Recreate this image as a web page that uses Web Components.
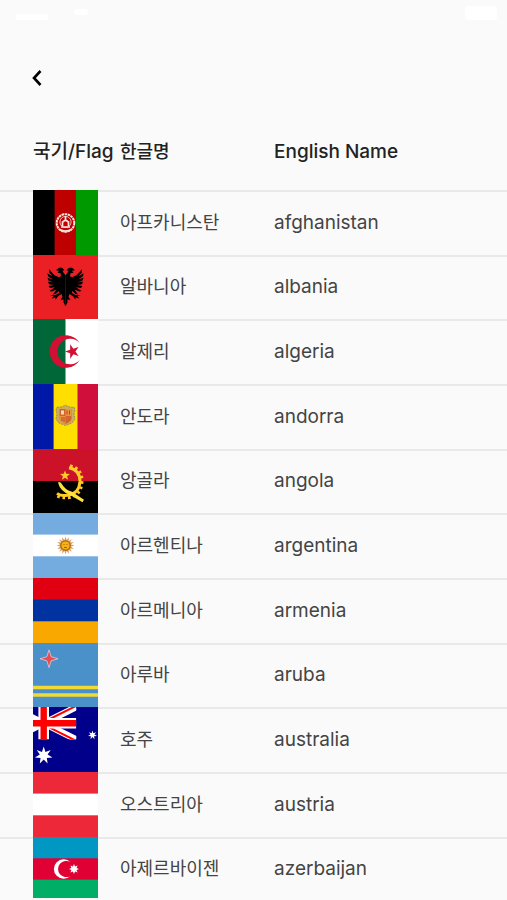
<!DOCTYPE html>
<html lang="ko">
<head>
<meta charset="utf-8">
<meta name="viewport" content="width=device-width, initial-scale=1">
<title>국기/Flag</title>
<style>
    body {
        margin: 0;
        background: #fafafa;
        color: #444;
        font-family: Inter, 'Noto Sans CJK KR', sans-serif;
    }
</style>
</head>
<body>
<flag-app>
    <status-bar slot="top"></status-bar>
    <nav-bar slot="top"></nav-bar>
    <country-table></country-table>
</flag-app>

<script>
// points of a regular star, first point at the given angle
const star = (cx, cy, outer, inner, points, angle = -90) => {
    const list = [];
    for (let i = 0; i < points * 2; i++) {
        const r = i % 2 ? inner : outer;
        const a = (angle + i * 180 / points) * Math.PI / 180;
        list.push(`${(cx + r * Math.cos(a)).toFixed(2)},${(cy + r * Math.sin(a)).toFixed(2)}`);
    }
    return list.join(' ');
};

const bands = (a, b, c) => `
    <rect width="65" height="65" fill="${b}"/>
    <rect width="65" height="21.6" fill="${a}"/>
    <rect y="43.3" width="65" height="21.7" fill="${c}"/>`;

const pales = (a, b, c, left = 21.6, right = 43) => `
    <rect width="65" height="65" fill="${b}"/>
    <rect width="${left}" height="65" fill="${a}"/>
    <rect x="${right}" width="${65 - right}" height="65" fill="${c}"/>`;

const eagleHalf = `
    <path d="M32.5 20.5 L30.5 18 L29.5 16 L31.5 15.5 L29 13 L26 13 L23 15.500 L26 16 L24.5 18 L27.5 18.5 L28 21.500 L26 22.5
        L21.500 20.500 L16 14.5 L16 17.500 L19.5 21.5 L14.500 18.5 L15 21.500 L20 25 L14.500 23 L15.500 26 L20.5 28 L15 27 L16 29.8
        L21 30.500 L15.500 31.5 L17 33.5 L22 32.8 L16.500 36.500 L19 37 L23.5 35 L20 40 L22.5 39.5 L26 36.5 L26 38.500 L22.500 40.500
        L17.5 40.5 L20.5 42 L18.5 44.5 L22.5 43 L22.5 45.5 L25 42 L28.500 39.500 L29.500 42.500 L27.500 46 L30.500 45 L30.5 48 L32.5 52 Z"/>`;

const flags = {
    afghanistan: `${pales('#000', '#be0000', '#009a00')}
        <g fill="none" stroke="#fbe5df">
            <circle cx="32.5" cy="33" r="8.800" stroke-width="2" stroke-dasharray="2.500 .6"/>
            <circle cx="32.5" cy="32" r="5.6" stroke-width=".8"/>
            <path d="M28 37h9M29.500 36v-4l3-2 3 2v4M32.500 26v4M26.500 39.500q6 3 12 0" stroke-width="1.700"/>
        </g>`,
    albania: `<rect width="65" height="65" fill="#ea2024"/>${eagleHalf}
        <g transform="matrix(-1 0 0 1 65 0)">${eagleHalf}</g>`,
    algeria: `<rect width="65" height="65" fill="#fff"/><rect width="32.500" height="65" fill="#006738"/>
        <path d="M46.800 24A16.300 16.300 0 1 0 46.800 41A12.800 12.800 0 1 1 46.800 24Z" fill="#d21034"/>
        <polygon points="${star(39.5, 32.5, 7.5, 2.9, 5, 180)}" fill="#d21034"/>`,
    andorra: `${pales('#0018a8', '#fedf00', '#d0103a', 20.6, 44.5)}
        <path d="M24 23q4 1 8.500-2Q37 24 41 23l1 3-1 4 1 5-3 4-6.500 2.500L26 39l-3-4 1-5-1-4Z" fill="#c9ae5b" stroke="#a58a4d" stroke-width="1" stroke-dasharray="2 1"/>
        <path d="M26.500 25h12v10q-1 3-6 5-5-2-6-5Z" fill="#d5632f"/>
        <path d="M32.500 25h6v7h-6ZM26.500 32h6v8q-5-2-6-5Z" fill="#e7963a"/>
        <path d="M28 26.500h3v4h-3Z" fill="#f4dfb4"/>
        <path d="M34 26.500v4M36.500 26.500v4M29 33v4M31 33v5" stroke="#c63d2f"/>`,
    angola: `<rect width="65" height="65"/><rect width="65" height="32.500" fill="#cc1228"/>
        <path d="M36 19Q47 21 47 33Q46 46 34 47Q28 48 24 45" fill="none" stroke="#ffcb28" stroke-width="3"/>
        <path d="M37 17Q49.500 20 49 33Q48.500 47.500 35 49.500Q28 50 22.500 47" fill="none" stroke="#ffcb28" stroke-width="3" stroke-dasharray="2.600 2.800"/>
        <path d="M25 34q2-1.500 3.500 1 3 6 10.500 8.500l12 8-1.500 2.500-12-7Q27 43 25 34Z" fill="#ffe13b"/>
        <polygon points="${star(32, 27, 5.2, 2.2, 5)}" fill="#ffcb28"/>`,
    argentina: `${bands('#74acdf', '#fff', '#74acdf')}
        <polygon points="${star(32.5, 32.5, 9, 5.5, 16)}" fill="#d9a066"/>
        <circle cx="32.500" cy="32.500" r="4.700" fill="#f6b40e" stroke="#aa6518" stroke-width="1.300"/>
        <path d="M30.500 31.500h1M33.500 31.500h1M31 34.500h3" stroke="#85340a" stroke-width=".7"/>`,
    armenia: bands('#e00012', '#0033a0', '#f9a800'),
    aruba: `<rect width="65" height="65" fill="#4a90c9"/>
        <path d="M0 43.500h65v3.500H0ZM0 51h65v3.500H0Z" fill="#f3d936"/>
        <polygon points="${star(16, 16, 9, 3, 4)}" fill="#ec4a4d" stroke="#d9cfe2" stroke-width=".8"/>`,
    australia: `<rect width="65" height="65" fill="#00008b"/>
        <svg width="43.300" height="32.500" viewBox="0 0 43.300 32.500">
            <path d="M-22 0L43.300 32.500M-22 32.500L43.300 0" stroke="#fff" stroke-width="6.500"/>
            <path d="M10.700 17.600L43.300 33.900M10.700 15L43.300 -1.200" stroke="#f00" stroke-width="2"/>
            <path d="M10.700 0V32.500M0 16.300H43.300" stroke="#fff" stroke-width="10.600"/>
            <path d="M10.700 0V32.500M0 16.300H43.300" stroke="#f00" stroke-width="6.400"/>
        </svg>
        <polygon points="${star(10.7, 48.5, 9, 4, 7)}" fill="#fff"/>
        <polygon points="${star(59.5, 28, 4.6, 2, 7)}" fill="#fff"/>`,
    austria: bands('#ed2939', '#fff', '#ed2939'),
    azerbaijan: `${bands('#0098c3', '#e00034', '#00ae65')}
        <path d="M37.500 25.500A9.800 9.800 0 1 0 37.500 39.500A8.200 8.200 0 1 1 37.500 25.500Z" fill="#fff"/>
        <polygon points="${star(41, 32.5, 5, 2.8, 8)}" fill="#fff"/>`
};

const countries = [
    ['아프카니스탄', 'afghanistan'],
    ['알바니아', 'albania'],
    ['알제리', 'algeria'],
    ['안도라', 'andorra'],
    ['앙골라', 'angola'],
    ['아르헨티나', 'argentina'],
    ['아르메니아', 'armenia'],
    ['아루바', 'aruba'],
    ['호주', 'australia'],
    ['오스트리아', 'austria'],
    ['아제르바이젠', 'azerbaijan']
];

class FlagApp extends HTMLElement {
    constructor() {
        super();
        this.attachShadow({ mode: 'open' }).innerHTML = `
            <style>
                :host {
                    display: flex;
                    flex-direction: column;
                    height: 100vh;
                    padding-bottom: 2px;
                    box-sizing: border-box;
                }
                main {
                    flex: 1;
                    min-height: 0;
                    overflow-y: auto;
                    scrollbar-width: none;
                }
            </style>
            <slot name="top"></slot>
            <main><slot></slot></main>
        `;
    }
}

class StatusBar extends HTMLElement {
    constructor() {
        super();
        this.attachShadow({ mode: 'open' }).innerHTML = `
            <style>
                :host {
                    display: flex;
                    justify-content: space-between;
                    flex: none;
                    height: 44px;
                    padding: 4px 10px 0 16px;
                    box-sizing: border-box;
                }
            </style>
            <svg width="76" height="20" fill="#fff" aria-hidden="true">
                <rect y="10" width="32" height="6" rx="2"/>
                <rect x="58" y="5" width="14" height="6" rx="3"/>
            </svg>
            <svg width="32" height="20" fill="#fff" aria-hidden="true">
                <rect y="2" width="32" height="14" rx="3"/>
            </svg>
        `;
    }
}

class NavBar extends HTMLElement {
    constructor() {
        super();
        this.attachShadow({ mode: 'open' }).innerHTML = `
            <style>
                :host {
                    display: flex;
                    align-items: center;
                    flex: none;
                    height: 68px;
                    padding: 0 16px;
                }
                button {
                    display: grid;
                    place-items: center;
                    width: 42px;
                    height: 42px;
                    padding: 0;
                    border: none;
                    background: transparent;
                    color: #000;
                    cursor: pointer;
                }
            </style>
            <button type="button" aria-label="뒤로">
                <svg width="10" height="16" fill="none" stroke="currentColor" stroke-width="2.600">
                    <path d="M8.500 1L2 8L8.500 15"/>
                </svg>
            </button>
        `;
    }
}

class CountryFlag extends HTMLElement {
    connectedCallback() {
        const name = this.getAttribute('name');
        this.attachShadow({ mode: 'open' }).innerHTML = `
            <style>
                :host {
                    display: block;
                    width: 65px;
                    height: var(--row-height, 65px);
                }
                .flag {
                    display: block;
                    width: 100%;
                    height: 100%;
                }
            </style>
            <svg class="flag" viewBox="0 0 65 65" preserveAspectRatio="none" aria-hidden="true">${flags[name]}</svg>
        `;
    }
}

class CountryTable extends HTMLElement {
    constructor() {
        super();
        this.attachShadow({ mode: 'open' });
    }

    connectedCallback() {
        this.render();
    }

    render() {
        this.shadowRoot.innerHTML = `
            <style>
                :host {
                    display: block;
                }
                table {
                    width: 100%;
                    table-layout: fixed;
                    border-spacing: 0;
                    font-size: 19px;
                    line-height: 24px;
                    text-align: left;
                    white-space: nowrap;
                }
                th, td {
                    padding: 0;
                }
                th {
                    height: 76px;
                    padding-top: 2px;
                    color: #222;
                    font-weight: 500;
                }
                tbody tr {
                    --row-height: 65px;
                }
                /* keeps the rows a little under 65px on average */
                tbody tr:nth-child(3n + 2) {
                    --row-height: 64px;
                }
                td {
                    height: var(--row-height);
                    box-shadow: inset 0 2px #e9e9e9;
                }
                tr > :first-child {
                    width: 87px;
                    padding-left: 33px;
                }
                tr > :nth-child(2) {
                    width: 154px;
                    font-size: 18px;
                }
            </style>
            <table>
                <thead>
                    <tr><th>국기/Flag</th><th>한글명</th><th>English Name</th></tr>
                </thead>
                <tbody>
                    ${countries.map(([korean, english]) => `
                        <tr>
                            <td><country-flag name="${english}"></country-flag></td>
                            <td>${korean}</td>
                            <td>${english}</td>
                        </tr>`
                    ).join('')}
                </tbody>
            </table>
        `;
    }
}

customElements.define('country-flag', CountryFlag);
customElements.define('country-table', CountryTable);
customElements.define('status-bar', StatusBar);
customElements.define('nav-bar', NavBar);
customElements.define('flag-app', FlagApp);
</script>
</body>
</html>
